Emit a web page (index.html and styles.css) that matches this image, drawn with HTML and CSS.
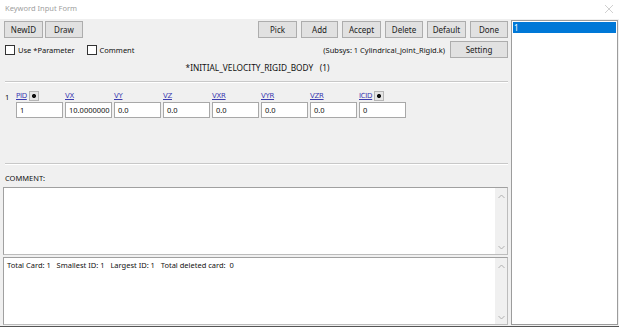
FILE: index.html
```html
<!DOCTYPE html>
<html lang="en">

<head>
    <meta charset="UTF-8">
    <title>Keyword Input Form</title>
    <link rel="stylesheet" href="styles.css">
</head>

<body>
    <div class="window">
        <div class="titlebar">
            <span class="title">Keyword Input Form</span>
            <svg class="close" width="10" height="10" viewBox="0 0 10 10"><path d="M1 1L9 9M9 1L1 9" stroke="#d0d0d0" stroke-width="1"/></svg>
        </div>
        <div class="body">
            <div class="form">
                <div class="toolbar">
                    <div class="btn w39">NewID</div>
                    <div class="btn w38">Draw</div>
                    <div class="spacer"></div>
                    <div class="btn w39">Pick</div>
                    <div class="btn w37">Add</div>
                    <div class="btn w39">Accept</div>
                    <div class="btn w38">Delete</div>
                    <div class="btn w39">Default</div>
                    <div class="btn w38">Done</div>
                </div>

                <div class="options">
                    <label class="chk"><span class="box"></span>Use *Parameter</label>
                    <label class="chk"><span class="box"></span>Comment</label>
                    <div class="spacer"></div>
                    <span class="subsys">(Subsys: 1 Cylindrical_joint_Rigid.k)</span>
                    <div class="btn setting">Setting</div>
                </div>

                <div class="kwtitle">*INITIAL_VELOCITY_RIGID_BODY&nbsp;&nbsp;&nbsp;(1)</div>
                <div class="sep"></div>

                <div class="card">
                    <span class="cardno">1</span>
                    <div class="fields">
                        <div class="field">
                            <div class="lbl"><a>PID</a><span class="pick"></span></div>
                            <div class="input">1</div>
                        </div>
                        <div class="field">
                            <div class="lbl"><a>VX</a></div>
                            <div class="input">10.0000000</div>
                        </div>
                        <div class="field">
                            <div class="lbl"><a>VY</a></div>
                            <div class="input">0.0</div>
                        </div>
                        <div class="field">
                            <div class="lbl"><a>VZ</a></div>
                            <div class="input">0.0</div>
                        </div>
                        <div class="field">
                            <div class="lbl"><a>VXR</a></div>
                            <div class="input">0.0</div>
                        </div>
                        <div class="field">
                            <div class="lbl"><a>VYR</a></div>
                            <div class="input">0.0</div>
                        </div>
                        <div class="field">
                            <div class="lbl"><a>VZR</a></div>
                            <div class="input">0.0</div>
                        </div>
                        <div class="field">
                            <div class="lbl"><a>ICID</a><span class="pick"></span></div>
                            <div class="input">0</div>
                        </div>
                    </div>
                </div>

                <div class="sep lower"></div>
                <div class="comment-label">COMMENT:</div>

                <div class="textbox comment">
                    <div class="text"></div>
                    <div class="vscroll">
                        <svg width="7" height="5" viewBox="0 0 7 5"><path d="M0.5 4L3.5 1L6.5 4" fill="none" stroke="#b0b0b0"/></svg>
                        <svg width="7" height="5" viewBox="0 0 7 5"><path d="M0.5 1L3.5 4L6.5 1" fill="none" stroke="#b0b0b0"/></svg>
                    </div>
                </div>

                <div class="textbox info">
                    <div class="text">Total Card: 1&nbsp;&nbsp;&nbsp;Smallest ID: 1&nbsp;&nbsp;&nbsp;Largest ID: 1&nbsp;&nbsp;&nbsp;Total deleted card:&nbsp;&nbsp;0</div>
                    <div class="vscroll">
                        <svg width="7" height="5" viewBox="0 0 7 5"><path d="M0.5 4L3.5 1L6.5 4" fill="none" stroke="#b0b0b0"/></svg>
                        <svg width="7" height="5" viewBox="0 0 7 5"><path d="M0.5 1L3.5 4L6.5 1" fill="none" stroke="#b0b0b0"/></svg>
                    </div>
                </div>
            </div>

            <div class="idlist">
                <div class="item selected">1</div>
            </div>
        </div>
    </div>
</body>

</html>
```

FILE: styles.css
```css
body {
    margin: 0;
    font-family: "Noto Sans", "Open Sans", sans-serif;
    font-size: 7.5px;
    color: #111;
}

.window {
    width: 619px;
    height: 327px;
    display: flex;
    flex-direction: column;
    background: #f0f0f0;
    border-bottom: 1px solid #555;
    box-sizing: border-box;
}

/* 标题栏 */
.titlebar {
    height: 19px;
    background: #fff;
    display: flex;
    align-items: center;
    padding: 0 5px 0 5px;
}
.title {
    color: #a0a0a0;
    margin-top: -3px;
}
.close {
    margin-left: auto;
    margin-top: -2px;
}

.body {
    flex: 1;
    display: flex;
    min-height: 0;
}

.form {
    width: 505px;
    padding-left: 3px;
    display: flex;
    flex-direction: column;
}

.spacer {
    flex: 1;
}

/* 按钮 */
.btn {
    height: 15px;
    line-height: 15px;
    background: #e1e1e1;
    border: 1px solid #adadad;
    text-align: center;
    font-size: 8px;
    color: #222;
}
.w37 { width: 35px; }
.w38 { width: 36px; }
.w39 { width: 37px; }

.toolbar {
    display: flex;
    gap: 4px;
    margin-top: 2px;
    padding-left: 1px;
}
.toolbar .btn:nth-child(2) {
    margin-left: -2px;
}

.options {
    display: flex;
    align-items: center;
    margin-top: 3px;
    height: 17px;
}
.chk {
    display: flex;
    align-items: center;
    margin-left: 2px;
    margin-right: 10px;
}
.chk .box {
    width: 8px;
    height: 8px;
    border: 1px solid #333;
    background: #fff;
    margin-right: 3px;
}
.subsys {
    margin-right: 5px;
}
.btn.setting {
    width: 56px;
}

.kwtitle {
    text-align: center;
    margin-top: 3px;
    padding-left: 4px;
    height: 13px;
    line-height: 13px;
    font-size: 8.3px;
}

.sep {
    height: 0;
    border-top: 1px solid #c8c8c8;
    border-bottom: 1px solid #fff;
    margin: 7px 0 0 2px;
}
.sep.lower {
    margin-top: 45px;
}

/* 卡片 */
.card {
    display: flex;
    margin-top: 7px;
}
.cardno {
    width: 11px;
    padding-left: 2px;
    line-height: 14px;
}
.fields {
    display: flex;
    gap: 2px;
}
.field {
    width: 47px;
    display: flex;
    flex-direction: column;
}
.lbl {
    height: 11px;
    display: flex;
    align-items: center;
    gap: 2px;
    font-family: "DejaVu Sans", sans-serif;
    font-size: 7px;
    letter-spacing: -0.3px;
}
.lbl a {
    color: #3b3bb0;
    text-decoration: underline;
}
.pick {
    width: 8px;
    height: 8px;
    border: 1px solid #b5b5b5;
    background: #e4e4e4 radial-gradient(circle, #111 0 1.8px, transparent 2.3px);
}
.input {
    height: 14px;
    line-height: 14px;
    margin-top: 1px;
    background: #fff;
    border: 1px solid #a8a8a8;
    padding-left: 3px;
    font-size: 7.5px;
    overflow: hidden;
    white-space: nowrap;
}

.comment-label {
    margin-top: 6px;
    height: 14px;
    line-height: 14px;
    padding-left: 2px;
}

/* 文本框 */
.textbox {
    display: flex;
    background: #fff;
    border: 1px solid #a0a0a0;
    border-right-color: #bcbcbc;
    border-bottom-color: #bcbcbc;
}
.textbox.comment {
    height: 66px;
    margin-top: 2px;
}
.textbox.info {
    height: 66px;
    margin-top: 2px;
}
.textbox .text {
    flex: 1;
    padding: 2px 3px;
}
.vscroll {
    width: 12px;
    background: #f0f0f0;
    display: flex;
    flex-direction: column;
    justify-content: space-between;
    align-items: center;
    padding: 6px 0 4px;
}

/* 右侧ID列表 */
.idlist {
    margin: 1px 1px 1px 3px;
    flex: 1;
    background: #fff;
    border: 1px solid #9c9c9c;
    padding: 1px;
}
.item {
    height: 11px;
    line-height: 11px;
    font-size: 8px;
    padding-left: 1px;
}
.item.selected {
    background: #0078d7;
    color: #fff;
}
```
